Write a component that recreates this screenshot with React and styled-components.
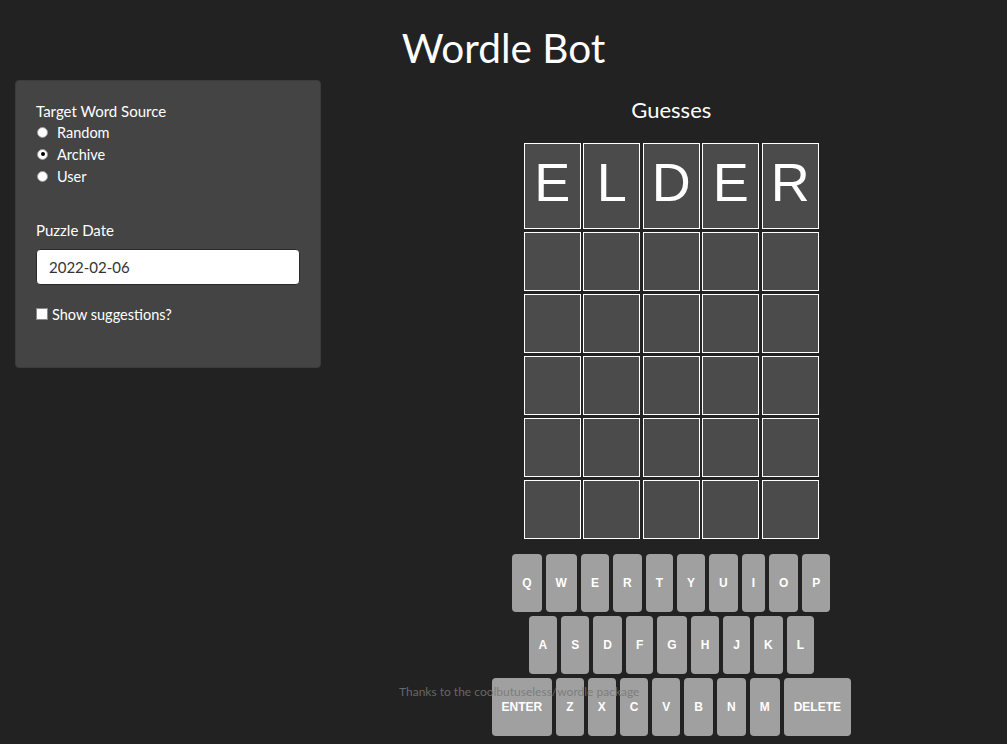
import React from "react";
import styled, { createGlobalStyle } from "styled-components";

const GlobalStyle = createGlobalStyle`
  html, body {
    margin: 0;
    padding: 0;
    background: #222222;
    font-family: Lato, "Open Sans", sans-serif;
    color: #ffffff;
  }
  * { box-sizing: border-box; }
`;

const Page = styled.div`
  position: relative;
  min-height: 744px;
  padding: 26px 15px 0;
`;

const Title = styled.h1`
  margin: 0 0 10px;
  font-size: 40.5px;
  line-height: 44px;
  font-weight: 400;
  text-align: center;
  color: #ffffff;
`;

const Row = styled.div`
  display: flex;
  margin: 0 -15px;
`;

const SideCol = styled.div`
  width: 33.3333%;
  padding: 0 15px;
`;

const MainCol = styled.div`
  width: 66.6667%;
  padding: 0 15px;
  display: flex;
  flex-direction: column;
  align-items: center;
`;

const Well = styled.div`
  background: #444444;
  border: 1px solid #3c3c3c;
  border-radius: 4px;
  padding: 20px 20px 43px;
`;

const ControlLabel = styled.div`
  font-size: 15px;
  line-height: 20px;
  color: #ffffff;
  margin-bottom: ${(p) => p.$mb || 0}px;
`;

const RadioGroup = styled.div`
  display: flex;
  flex-direction: column;
  margin-bottom: 33px;
`;

const RadioRow = styled.label`
  display: flex;
  align-items: center;
  gap: 9px;
  height: 22px;
  font-size: 14.5px;
  color: #ffffff;
  padding-left: 1px;
`;

const RadioDot = styled.span`
  width: 11px;
  height: 11px;
  border-radius: 50%;
  background: #ffffff;
  border: 1px solid #9a9a9a;
  display: flex;
  align-items: center;
  justify-content: center;
  &::after {
    content: "";
    width: 4px;
    height: 4px;
    border-radius: 50%;
    background: ${(p) => (p.$checked ? "#000000" : "transparent")};
  }
`;

const DateInput = styled.div`
  height: 36px;
  background: #ffffff;
  border: 1px solid #2a2a2a;
  border-radius: 4px;
  padding: 0 12px;
  display: flex;
  align-items: center;
  font-size: 15px;
  color: #333333;
  margin-bottom: 19px;
`;

const CheckRow = styled.label`
  display: flex;
  align-items: center;
  gap: 4px;
  height: 20px;
  font-size: 14.5px;
  color: #ffffff;
`;

const CheckBox = styled.span`
  width: 12px;
  height: 12px;
  background: #ffffff;
  border: 1px solid #8a8a8a;
`;

const SectionTitle = styled.h3`
  margin: 17px 0 20px;
  font-size: 22px;
  line-height: 26px;
  font-weight: 400;
  color: #ffffff;
`;

const Grid = styled.div`
  display: grid;
  grid-template-columns: repeat(5, 57px);
  column-gap: 2.5px;
  row-gap: 3px;
`;

const Tile = styled.div`
  min-height: 59px;
  background: #4b4b4b;
  border: 1px solid #ffffff;
  color: #ffffff;
  font-family: "Liberation Sans", Arial, sans-serif;
  font-size: 54px;
  line-height: 76px;
  padding-bottom: ${(p) => (p.$filled ? 8 : 0)}px;
  text-align: center;
`;

const Keyboard = styled.div`
  margin-top: 15px;
  display: flex;
  flex-direction: column;
  align-items: center;
  gap: 4px;
`;

const KeyRow = styled.div`
  display: flex;
  gap: 4px;
`;

const Key = styled.button`
  height: 58px;
  padding: 0 10px;
  border: none;
  border-radius: 4px;
  background: #a0a0a0;
  color: #ffffff;
  font-family: "Liberation Sans", Arial, sans-serif;
  font-size: 12px;
  font-weight: 700;
  display: flex;
  align-items: center;
  justify-content: center;
`;

const Footer = styled.div`
  position: absolute;
  left: 399px;
  top: 684px;
  font-size: 12px;
  line-height: 16px;
  color: rgba(118, 118, 118, 0.85);
  white-space: nowrap;
`;

const FooterLink = styled.a`
  color: inherit;
  text-decoration: none;
`;

const guesses = [
  ["E", "L", "D", "E", "R"],
  ["", "", "", "", ""],
  ["", "", "", "", ""],
  ["", "", "", "", ""],
  ["", "", "", "", ""],
  ["", "", "", "", ""],
];

const keyRows = [
  ["Q", "W", "E", "R", "T", "Y", "U", "I", "O", "P"],
  ["A", "S", "D", "F", "G", "H", "J", "K", "L"],
  ["ENTER", "Z", "X", "C", "V", "B", "N", "M", "DELETE"],
];

export default function App() {
  return (
    <>
      <GlobalStyle />
      <Page>
        <Title>Wordle Bot</Title>
        <Row>
          <SideCol>
            <Well>
              <ControlLabel>Target Word Source</ControlLabel>
              <RadioGroup>
                {["Random", "Archive", "User"].map((o) => (
                  <RadioRow key={o}>
                    <RadioDot $checked={o === "Archive"} />
                    {o}
                  </RadioRow>
                ))}
              </RadioGroup>
              <ControlLabel $mb={9}>Puzzle Date</ControlLabel>
              <DateInput>2022-02-06</DateInput>
              <CheckRow>
                <CheckBox />
                Show suggestions?
              </CheckRow>
            </Well>
          </SideCol>
          <MainCol>
            <SectionTitle>Guesses</SectionTitle>
            <Grid>
              {guesses.flatMap((row, r) =>
                row.map((ch, c) => (
                  <Tile key={`${r}-${c}`} $filled={r === 0}>
                    {ch}
                  </Tile>
                ))
              )}
            </Grid>
            <Keyboard>
              {keyRows.map((row, i) => (
                <KeyRow key={i}>
                  {row.map((k) => (
                    <Key key={k}>{k}</Key>
                  ))}
                </KeyRow>
              ))}
            </Keyboard>
          </MainCol>
        </Row>
        <Footer>
          Thanks to the <FooterLink href="#">coolbutuseless/wordle</FooterLink> package
        </Footer>
      </Page>
    </>
  );
}
